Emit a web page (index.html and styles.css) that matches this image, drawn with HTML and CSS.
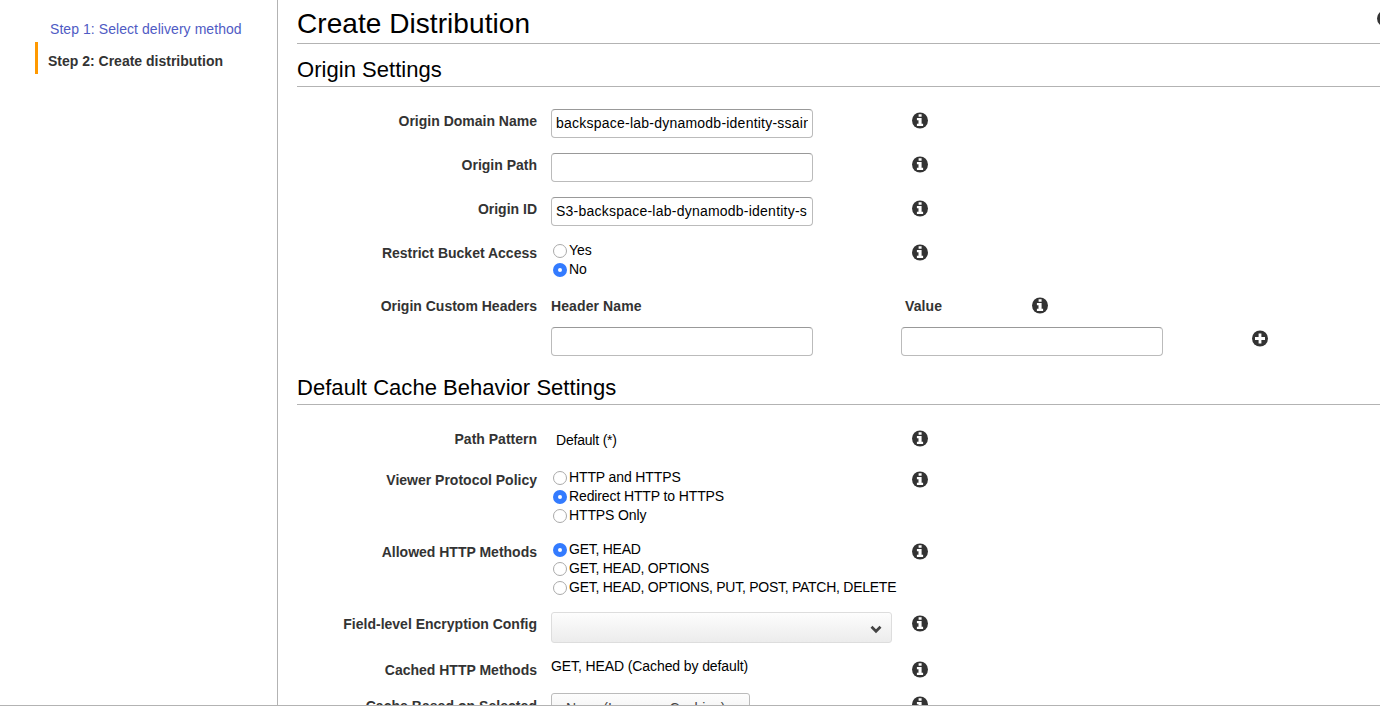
FILE: index.html
```
<!DOCTYPE html>
<html lang="en">
<head>
<meta charset="utf-8">
<title>Create Distribution</title>
<link rel="stylesheet" href="styles.css">
</head>
<body>
<svg class="defs" width="0" height="0">
  <symbol id="info" viewBox="0 0 16 16">
    <circle cx="8" cy="8" r="8" fill="#333"/>
    <path d="M6.600 1.800h3v2.500h-3zM4.900 5.600h4.700v5.600h1.500v2.200H4.900v-2.200h1.600V7.800H4.900z" fill="#fff"/>
  </symbol>
  <symbol id="plus" viewBox="0 0 16 16">
    <circle cx="8" cy="8" r="8" fill="#333"/>
    <path d="M6.600 3h2.800v3.600H13v2.800H9.400V13H6.600V9.400H3V6.600h3.600z" fill="#fff"/>
  </symbol>
</svg>
<div class="page">
  <nav class="steps">
    <a class="step" href="#">Step 1: Select delivery method</a>
    <div class="step current">Step 2: Create distribution</div>
  </nav>
  <main class="content">
    <header class="title-bar">
      <h1>Create Distribution</h1>
      <svg class="icon help"><use href="#info"/></svg>
    </header>
    <h2>Origin Settings</h2>
    <section class="form">
      <div class="row h44"><label>Origin Domain Name</label><input class="text" value="backspace-lab-dynamodb-identity-ssain"><svg class="icon"><use href="#info"/></svg></div>
      <div class="row h44"><label>Origin Path</label><input class="text"><svg class="icon"><use href="#info"/></svg></div>
      <div class="row h44"><label>Origin ID</label><input class="text origin-id" value="S3-backspace-lab-dynamodb-identity-s"><svg class="icon"><use href="#info"/></svg></div>
      <div class="row h53"><label>Restrict Bucket Access</label>
        <div class="radios">
          <div class="option"><i class="radio"></i>Yes</div>
          <div class="option"><i class="radio on"></i>No</div>
        </div><svg class="icon"><use href="#info"/></svg></div>
      <div class="row headers"><label>Origin Custom Headers</label>
        <div class="column"><b>Header Name</b><input class="text"></div>
        <div class="column value"><div class="value-head"><b>Value</b><svg class="icon"><use href="#info"/></svg></div><input class="text"></div>
        <svg class="icon add"><use href="#plus"/></svg></div>
    </section>
    <h2 class="cache-title">Default Cache Behavior Settings</h2>
    <section class="form">
      <div class="row h41"><label>Path Pattern</label><div class="static pattern">Default (*)</div><svg class="icon"><use href="#info"/></svg></div>
      <div class="row h72"><label>Viewer Protocol Policy</label>
        <div class="radios protocols">
          <div class="option"><i class="radio"></i>HTTP and HTTPS</div>
          <div class="option"><i class="radio on"></i>Redirect HTTP to HTTPS</div>
          <div class="option"><i class="radio"></i>HTTPS Only</div>
        </div><svg class="icon"><use href="#info"/></svg></div>
      <div class="row h72"><label>Allowed HTTP Methods</label>
        <div class="radios methods">
          <div class="option"><i class="radio on"></i>GET, HEAD</div>
          <div class="option"><i class="radio"></i>GET, HEAD, OPTIONS</div>
          <div class="option"><i class="radio"></i>GET, HEAD, OPTIONS, PUT, POST, PATCH, DELETE</div>
        </div><svg class="icon"><use href="#info"/></svg></div>
      <div class="row h46"><label>Field-level Encryption Config</label>
        <div class="select"><svg class="chevron" viewBox="0 0 12 9"><path d="M1.500 1.800 6 6.300l4.500-4.500" fill="none" stroke="#444" stroke-width="2.700"/></svg></div>
        <svg class="icon"><use href="#info"/></svg></div>
      <div class="row h35"><label>Cached HTTP Methods</label><div class="static">GET, HEAD (Cached by default)</div><svg class="icon"><use href="#info"/></svg></div>
      <div class="row h46"><label class="cookies-label">Cache Based on Selected</label><div class="select cookies">None (Improves Caching)</div><svg class="icon"><use href="#info"/></svg></div>
    </section>
  </main>
</div>
</body>
</html>
```
FILE: styles.css
```
* { box-sizing: border-box; }
body {
  margin: 0;
  height: 715px;
  overflow: hidden;
  background: #fff;
  color: #000;
  font: 14px/19px "Liberation Sans", Arial, sans-serif;
}
.defs { display: block; height: 0; }
.page { display: flex; height: 706px; border-bottom: 1px solid #b3b3b3; overflow: hidden; }
.steps { flex: 0 0 278px; border-right: 1px solid #b3b3b3; padding: 13px 0 0 35px; }
.step { display: block; height: 29px; line-height: 32px; padding-left: 15px; color: #4f5bc4; letter-spacing: .06px; text-decoration: none; white-space: nowrap; }
.step.current { height: 32px; line-height: 38px; border-left: 3px solid #f90; padding-left: 10px; color: #333; font-weight: bold; letter-spacing: 0; }
.content { flex: none; width: 1102px; padding-left: 19px; overflow: hidden; }
.title-bar { display: flex; justify-content: space-between; height: 44px; border-bottom: 1px solid #b3b3b3; overflow: hidden; }
h1 { margin: 0; font-size: 28px; font-weight: normal; line-height: 47px; letter-spacing: .06px; white-space: nowrap; }
.icon.help { margin: 10px -13px 0 0; }
h2 { margin: 0; height: 43px; border-bottom: 1px solid #b3b3b3; font-size: 22px; font-weight: normal; line-height: 51px; letter-spacing: .04px; }
.form { padding-top: 22px; }
.row { display: grid; grid-template-columns: 240px 347px 16px; column-gap: 14px; align-items: start; }
.h35 { height: 35px; }
.h41 { height: 41px; }
.h44 { height: 44px; }
.h46 { height: 46px; }
.h53 { height: 53px; }
.h72 { height: 72px; }
label, b { color: #333; font-weight: bold; line-height: 24px; white-space: nowrap; }
label { text-align: right; }
b { letter-spacing: .1px; }
.cookies-label { line-height: 26px; letter-spacing: .04px; }
.icon { display: block; flex: none; width: 16px; height: 17px; margin-top: 3px; }
.text {
  display: block; width: 262px; height: 29px; padding: 0 4px 2px;
  border: 1px solid #bbb; border-top-color: #999; border-radius: 4px;
  background: #fff; color: #000; font: inherit; letter-spacing: .23px;
}
.radios { padding-left: 2px; }
.option { display: flex; align-items: center; gap: 2px; height: 19px; white-space: nowrap; }
.protocols { letter-spacing: -.12px; }
.methods { letter-spacing: -.26px; }
.radio { flex: none; width: 14px; height: 14px; margin-top: 1px; border: 1px solid #aaa; border-radius: 50%; background: #fff; }
.radio.on { border: 5px solid #337bff; }
.headers { grid-template-columns: 240px 336px 337px 16px; height: 70px; }
.column { display: grid; grid-template-rows: 33px 29px; }
.value-head { display: grid; grid-template-columns: 127px 16px; padding-left: 4px; }
.icon.add { margin-top: 36px; }
.cache-title { height: 41px; line-height: 47px; }
.static { line-height: 17px; letter-spacing: -.1px; white-space: nowrap; }
.pattern { padding-left: 5px; line-height: 26px; letter-spacing: -.2px; }
.select {
  display: flex; align-items: center; justify-content: flex-end; width: 341px; height: 31px; padding-right: 9px;
  border: 1px solid #ddd; border-radius: 3px; background: linear-gradient(#fdfdfd, #ececec);
}
.chevron { width: 12px; height: 9px; margin-top: 3px; }
.cookies { justify-content: flex-start; width: 199px; padding: 0 0 0 14px; border-color: #bbb; color: #444; white-space: nowrap; }
```
